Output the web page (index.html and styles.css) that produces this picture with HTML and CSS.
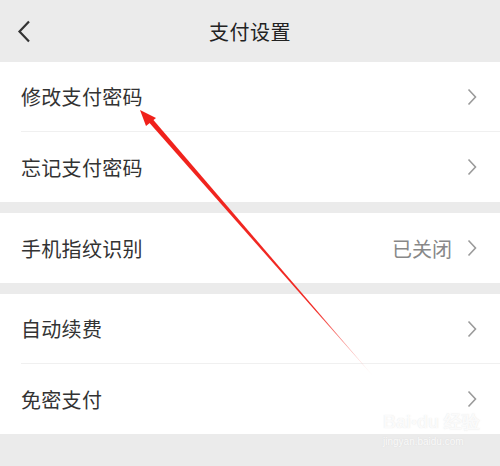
FILE: index.html
```html
<!DOCTYPE html>
<html lang="zh">
<head>
<meta charset="utf-8">
<link rel="stylesheet" href="styles.css">
</head>
<body>
<div class="page">
  <header class="bar">
    <svg class="back" width="16" height="24" viewBox="0 0 16 24"><path d="M12 1.5 L2.5 11.5 L12 21.5" fill="none" stroke="#333" stroke-width="2.2"/></svg>
    <h1 class="title">支付设置</h1>
  </header>
  <section class="group">
    <div class="row"><span class="label">修改支付密码</span><span class="right"><svg class="chev" width="10" height="18" viewBox="0 0 10 18"><path d="M1.5 1.5 L8.5 9 L1.5 16.5" fill="none" stroke="#9a9a9a" stroke-width="1.6"/></svg></span></div>
    <div class="row"><span class="label">忘记支付密码</span><span class="right"><svg class="chev" width="10" height="18" viewBox="0 0 10 18"><path d="M1.5 1.5 L8.5 9 L1.5 16.5" fill="none" stroke="#9a9a9a" stroke-width="1.6"/></svg></span></div>
  </section>
  <section class="group">
    <div class="row"><span class="label">手机指纹识别</span><span class="right"><span class="value">已关闭</span><svg class="chev" width="10" height="18" viewBox="0 0 10 18"><path d="M1.5 1.5 L8.5 9 L1.5 16.5" fill="none" stroke="#9a9a9a" stroke-width="1.6"/></svg></span></div>
  </section>
  <section class="group">
    <div class="row"><span class="label">自动续费</span><span class="right"><svg class="chev" width="10" height="18" viewBox="0 0 10 18"><path d="M1.5 1.5 L8.5 9 L1.5 16.5" fill="none" stroke="#9a9a9a" stroke-width="1.6"/></svg></span></div>
    <div class="row"><span class="label">免密支付</span><span class="right"><svg class="chev" width="10" height="18" viewBox="0 0 10 18"><path d="M1.5 1.5 L8.5 9 L1.5 16.5" fill="none" stroke="#9a9a9a" stroke-width="1.6"/></svg></span></div>
  </section>
  <svg class="arrow" width="500" height="466" viewBox="0 0 500 466">
    <defs>
      <linearGradient id="fade" x1="140" y1="110" x2="372" y2="376" gradientUnits="userSpaceOnUse">
        <stop offset="0" stop-color="#f0201a" stop-opacity="1"/>
        <stop offset="0.75" stop-color="#f0201a" stop-opacity="0.95"/>
        <stop offset="1" stop-color="#f0201a" stop-opacity="0.1"/>
      </linearGradient>
    </defs>
    <polygon points="146,119 150,116 373,376" fill="url(#fade)"/>
    <polygon points="140,110 156,118 146,126" fill="#f0201a"/>
  </svg>
  <div class="watermark">
    <div class="wm-top">Bai<span class="paw">●</span>du 经验</div>
    <div class="wm-url">jingyan.baidu.com</div>
  </div>
</div>
</body>
</html>
```
FILE: styles.css
```css
html, body {
  margin: 0;
  padding: 0;
}
body {
  width: 500px;
  height: 466px;
  overflow: hidden;
  background: #ebebeb;
  font-family: "Noto Sans CJK SC", "Noto Sans", sans-serif;
}
.page {
  position: relative;
  width: 500px;
  height: 466px;
  background: #ebebeb;
}
.bar {
  height: 62px;
  display: flex;
  align-items: center;
  justify-content: center;
  position: relative;
  background: #ebebeb;
}
.back {
  position: absolute;
  left: 17px;
  top: 20px;
}
.title {
  margin: 0;
  font-size: 20px;
  font-weight: normal;
  color: #222;
  letter-spacing: 0.5px;
}
.group {
  background: #fff;
  margin-bottom: 11px;
  padding-left: 21px;
}
.row {
  height: 69px;
  display: flex;
  align-items: center;
  justify-content: space-between;
  padding-right: 23px;
  border-bottom: 1px solid #f0f0f0;
}
.row:last-child {
  border-bottom: none;
  height: 70px;
}
.label {
  font-size: 20px;
  color: #333;
  letter-spacing: 0.3px;
}
.right {
  display: flex;
  align-items: center;
  gap: 15px;
}
.value {
  font-size: 20px;
  color: #888;
}
.chev {
  display: block;
}
.arrow {
  position: absolute;
  left: 0;
  top: 0;
  pointer-events: none;
}
.watermark {
  position: absolute;
  left: 383px;
  top: 412px;
  color: rgba(255,255,255,0.85);
  font-family: "Liberation Sans", sans-serif;
  text-shadow: 0 0 1px rgba(200,200,200,0.5);
}
.wm-top {
  font-size: 18px;
  font-weight: bold;
  line-height: 20px;
}
.paw {
  font-size: 10px;
  vertical-align: top;
}
.wm-url {
  font-size: 10px;
  line-height: 12px;
  margin-top: 4px;
}
```
